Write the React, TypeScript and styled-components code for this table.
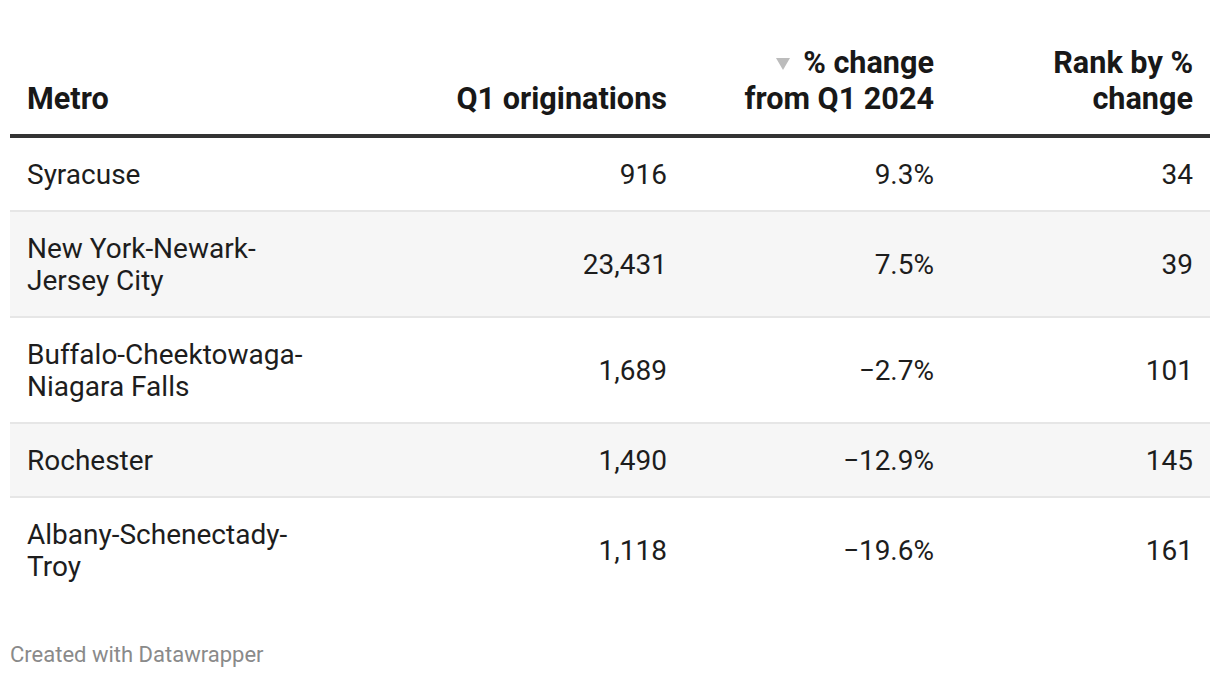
import React from 'react';
import styled, { createGlobalStyle } from 'styled-components';

const GlobalStyle = createGlobalStyle`
    body {
        margin: 0;
        background: #ffffff;
        font-family: Roboto, "Liberation Sans", Arial, sans-serif;
        color: #1d1d1d;
    }
`;

const Page = styled.div`
    width: 1220px;
    padding: 45px 10px 0;
    box-sizing: border-box;
`;

const Table = styled.table`
    width: 1200px;
    border-collapse: collapse;
    table-layout: fixed;
`;

const HeadCell = styled.th<{ $align?: 'left' | 'right'; $inset?: number }>`
    text-align: ${(p) => p.$align || 'right'};
    vertical-align: bottom;
    font-size: 30.6px;
    line-height: 36px;
    font-weight: 700;
    color: #181818;
    padding: 0 17px 17px ${(p) => p.$inset || 17}px;
    border-bottom: 4px solid #333333;
`;

const SortMark = styled.span`
    display: inline-block;
    width: 0;
    height: 0;
    border-left: 7px solid transparent;
    border-right: 7px solid transparent;
    border-top: 12px solid #bcbcbc;
    vertical-align: 3px;
    margin-right: 13px;
`;

const Row = styled.tr<{ $shaded: boolean; $last: boolean }>`
    background: ${(p) => (p.$shaded ? '#f6f6f6' : '#ffffff')};
    border-bottom: ${(p) => (p.$last ? 'none' : '2px solid #e6e6e6')};
`;

const Cell = styled.td<{ $align?: 'left' | 'right' }>`
    text-align: ${(p) => p.$align || 'right'};
    vertical-align: middle;
    font-size: 28px;
    line-height: 32px;
    padding: 21px 17px 19px;
    color: #1d1d1d;
`;

const Footer = styled.div`
    margin-top: 40px;
    font-size: 22px;
    color: #8a8a8a;
`;

const rows = [
    { metro: 'Syracuse', orig: '916', pct: '9.3%', rank: '34' },
    { metro: 'New York-Newark-Jersey City', orig: '23,431', pct: '7.5%', rank: '39' },
    { metro: 'Buffalo-Cheektowaga-Niagara Falls', orig: '1,689', pct: '\u22122.7%', rank: '101' },
    { metro: 'Rochester', orig: '1,490', pct: '\u221212.9%', rank: '145' },
    { metro: 'Albany-Schenectady-Troy', orig: '1,118', pct: '\u221219.6%', rank: '161' },
];

function App() {
    return (
        <Page>
            <GlobalStyle />
            <Table>
                <colgroup>
                    <col style={{ width: 314 }} />
                    <col style={{ width: 360 }} />
                    <col style={{ width: 267 }} />
                    <col style={{ width: 259 }} />
                </colgroup>
                <thead>
                    <tr>
                        <HeadCell $align="left">Metro</HeadCell>
                        <HeadCell>Q1 originations</HeadCell>
                        <HeadCell $inset={50}>
                            <SortMark />% change from Q1 2024
                        </HeadCell>
                        <HeadCell>Rank by % change</HeadCell>
                    </tr>
                </thead>
                <tbody>
                    {rows.map((r, i) => (
                        <Row key={r.metro} $shaded={i % 2 === 1} $last={i === rows.length - 1}>
                            <Cell $align="left">{r.metro}</Cell>
                            <Cell>{r.orig}</Cell>
                            <Cell>{r.pct}</Cell>
                            <Cell>{r.rank}</Cell>
                        </Row>
                    ))}
                </tbody>
            </Table>
            <Footer>Created with Datawrapper</Footer>
        </Page>
    );
}

export default App;
